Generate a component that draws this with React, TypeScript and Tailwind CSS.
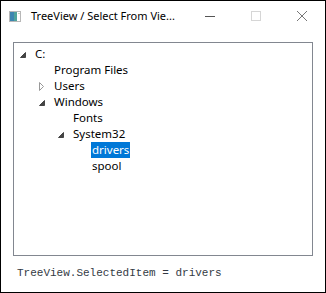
import React from 'react';

type Node = { label: string; level: number; state: 'open' | 'closed' | 'leaf'; selected?: boolean };

const nodes: Node[] = [
  { label: 'C:', level: 0, state: 'open' },
  { label: 'Program Files', level: 1, state: 'leaf' },
  { label: 'Users', level: 1, state: 'closed' },
  { label: 'Windows', level: 1, state: 'open' },
  { label: 'Fonts', level: 2, state: 'leaf' },
  { label: 'System32', level: 2, state: 'open' },
  { label: 'drivers', level: 3, state: 'leaf', selected: true },
  { label: 'spool', level: 3, state: 'leaf' },
];

function Expander({ state }: { state: Node['state'] }) {
  if (state === 'leaf') return <span className="w-[17px] shrink-0" />;
  return (
    <span className="w-[17px] h-[16px] shrink-0 flex items-center">
      {state === 'open' ? (
        <svg width="17" height="16" viewBox="0 0 17 16">
          <path d="M3.5 11.5 L8.5 11.5 L8.5 6.5 Z" fill="#444" stroke="#444" strokeWidth="1" />
        </svg>
      ) : (
        <svg width="17" height="16" viewBox="0 0 17 16">
          <path d="M3.5 4.5 L7.5 8.5 L3.5 12.5 Z" fill="none" stroke="#999" strokeWidth="1" />
        </svg>
      )}
    </span>
  );
}

export default function App() {
  return (
    <div className="w-[326px] h-[293px] bg-white border border-black flex flex-col font-['Noto_Sans',sans-serif] text-[11.5px] text-black">
      {/* title bar */}
      <div className="h-[30px] flex items-center shrink-0">
        <svg width="12" height="11" viewBox="0 0 12 11" className="ml-[8px] mr-[10px]">
          <rect x="0.5" y="0.5" width="11" height="10" fill="#fff" stroke="#b8b8b8" />
          <rect x="1" y="1" width="7" height="9" fill="#4fa39c" />
          <rect x="1" y="1" width="4" height="9" fill="#3d86b0" />
          <rect x="9" y="2" width="2" height="1" fill="#c8d8c0" />
        </svg>
        <span className="text-[11px] text-black">TreeView / Select From Vie...</span>
        <div className="ml-auto flex items-center">
          <svg width="46" height="30" viewBox="0 0 46 30">
            <path d="M18 15.5 H28" stroke="#555" strokeWidth="1" />
          </svg>
          <svg width="46" height="30" viewBox="0 0 46 30">
            <rect x="18.5" y="10.5" width="9" height="9" fill="none" stroke="#d6d6d6" />
          </svg>
          <svg width="46" height="30" viewBox="0 0 46 30">
            <path d="M18 10 L28 20 M28 10 L18 20" stroke="#777" strokeWidth="1" />
          </svg>
        </div>
      </div>

      {/* tree */}
      <div className="mx-[12px] mt-[11px] h-[214px] border border-[#828790] pt-[3px] pl-[3px]">
        {nodes.map((n) => (
          <div key={n.label} className="h-[16px] flex items-center" style={{ paddingLeft: n.level * 19 }}>
            <Expander state={n.state} />
            <span
              className={
                'px-[1px] h-[16px] leading-[16px] whitespace-nowrap ' +
                (n.selected ? 'bg-[#0078d7] text-white' : '')
              }
            >
              {n.label}
            </span>
          </div>
        ))}
      </div>

      {/* status */}
      <div className="mt-[9px] ml-[16px] font-['Liberation_Mono',monospace] text-[11px] text-[#333a44] leading-[16px]">
        TreeView.SelectedItem = drivers
      </div>
    </div>
  );
}
